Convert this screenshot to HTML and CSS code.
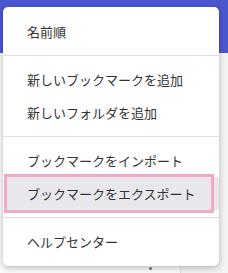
FILE: index.html
```html
<!DOCTYPE html>
<html>
<head>
  <meta charset="utf-8">
  <link rel="stylesheet" href="styles.css">
</head>
<body>
  <div class="page">
    <div class="topbar"></div>
    <div class="content">
      <div class="main"><span class="dot"></span></div>
      <div class="side"></div>
    </div>
  </div>

  <div class="menu">
    <div class="item">名前順</div>
    <div class="sep"></div>
    <div class="item">新しいブックマークを追加</div>
    <div class="item">新しいフォルダを追加</div>
    <div class="sep"></div>
    <div class="item">ブックマークをインポート</div>
    <div class="item active">ブックマークをエクスポート</div>
    <div class="sep"></div>
    <div class="item">ヘルプセンター</div>
  </div>
</body>
</html>
```

FILE: styles.css
```css
body{margin:0;font-family:"Noto Sans CJK JP","Noto Sans",sans-serif;background:#fff;overflow:hidden}
.page{height:273px;display:flex;flex-direction:column}
.topbar{height:53px;background:#4b57cf;flex:none}
.content{flex:1;display:flex;background:#fafafa}
.main{width:180px;border-right:1px solid #dcdcdc;display:flex;justify-content:flex-end;align-items:flex-end}
.side{flex:1;background:#f3f3f3}
.dot{width:3px;height:3px;border-radius:50%;background:#777;margin:0 28px 3px 0}
.menu{position:absolute;left:3px;top:7px;width:216px;background:#fff;border-radius:5px;padding:8px 0;box-shadow:0 2px 6px rgba(0,0,0,0.25),0 0 1px rgba(0,0,0,0.15)}
.item{height:33px;line-height:33px;padding-left:24px;font-size:13px;color:#333;white-space:nowrap}
.item.active{background:#e8e8ec;outline:3px solid #f2a8c7;margin:0 8px 0 4px;padding-left:20px;position:relative}
.item.active::after{content:"";position:absolute;top:0;bottom:0;right:-8px;width:5px;background:#e8e8ec}
.sep{height:1px;background:#e0e0e0;margin:7px 0}
```
